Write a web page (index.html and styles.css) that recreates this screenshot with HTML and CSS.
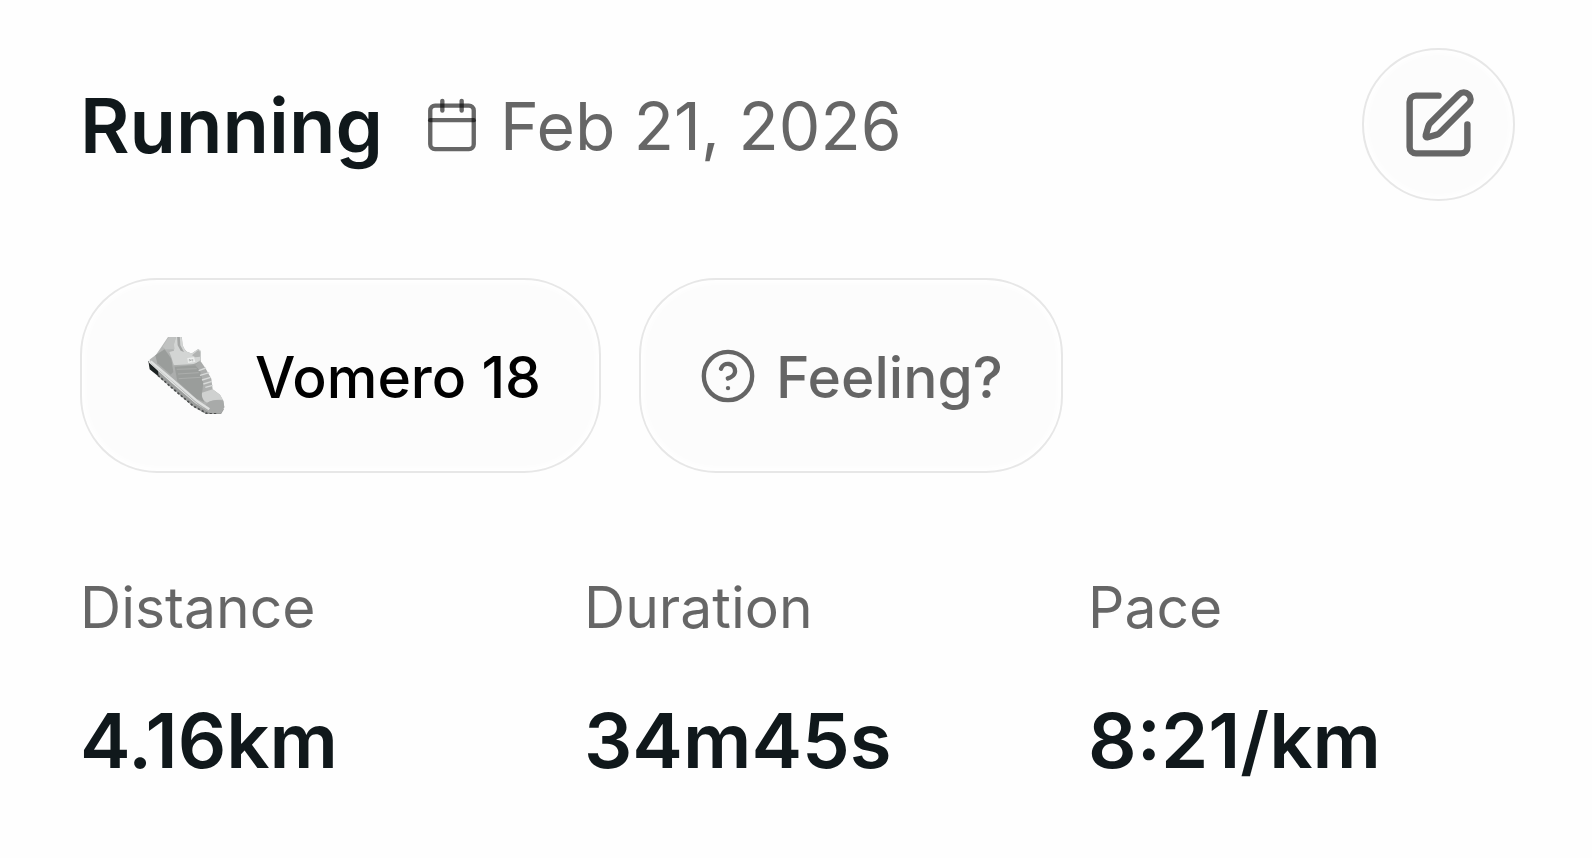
FILE: index.html
```html
<!DOCTYPE html>
<html lang="en">
<head>
  <meta charset="utf-8">
  <meta name="viewport" content="width=device-width, initial-scale=1">
  <title>Running</title>
  <link rel="stylesheet" href="styles.css">
</head>
<body>
  <main class="activity">
    <header class="activity-header">
      <div class="heading">
        <h1 class="title">Running</h1>
        <div class="date">
          <svg class="icon-small" viewBox="0 0 24 24" aria-hidden="true">
            <path d="M8 2v4"/>
            <path d="M16 2v4"/>
            <rect x="3" y="4" width="18" height="18" rx="2"/>
            <path d="M3 10h18"/>
          </svg>
          <time class="date-text" datetime="2026-02-21">Feb 21, 2026</time>
        </div>
      </div>
      <button class="edit" type="button" aria-label="Edit">
        <svg class="icon-edit" viewBox="0 0 24 24" aria-hidden="true">
          <path d="M12 3H5a2 2 0 0 0-2 2v14a2 2 0 0 0 2 2h14a2 2 0 0 0 2-2v-7"/>
          <path d="M18.375 2.625a1 1 0 0 1 3 3l-9.013 9.014a2 2 0 0 1-.853.505l-2.873.84a.5.5 0 0 1-.62-.62l.84-2.873a2 2 0 0 1 .506-.852z"/>
        </svg>
      </button>
    </header>

    <div class="chips">
      <button class="chip chip-shoe" type="button">
        <svg class="shoe" viewBox="30 51 288 231" aria-hidden="true">
          <defs>
            <linearGradient id="upper" x1="0" y1="0" x2="1" y2="1">
              <stop offset="0" stop-color="#b9bbba"/>
              <stop offset=".5" stop-color="#a9abaa"/>
              <stop offset="1" stop-color="#b4b6b5"/>
            </linearGradient>
            <filter id="soft" x="0" y="0" width="1" height="1">
              <feGaussianBlur stdDeviation="2"/>
            </filter>
          </defs>
          <g filter="url(#soft)">
            <path fill="#9b9d9c" d="M57 126L62 150L122 202L190 260L232 284H272L282 268L270 262L210 250L130 180Z"/>
            <path fill="#1d2020" d="M55 122L59 148L86 169L84 152Z"/>
            <path fill="none" stroke="#4d5050" stroke-width="5" stroke-dasharray="7 6" d="M84 166L124 202L190 258L232 281H262"/>
            <path fill="#e3e5e4" d="M58 118L57 128L84 152L126 190L196 250L234 273L262 276L240 258L180 216L112 158L72 116Z"/>
            <path fill="url(#upper)" d="M118 45H155L158 76C164 92 172 99 186 100L205 87L213 94L212 124L226 144L244 176L248 208L270 224L280 242L283 262L272 278H240L204 254L132 190L62 130L60 118L78 104L96 78Z"/>
            <path fill="#9a9d9b" d="M76 106L104 88L124 116L130 156L122 164L82 130Z"/>
            <path fill="#9a9d9b" d="M134 140L196 136L210 152L220 190L216 220L222 246L200 236L142 184Z"/>
            <path fill="#d3d5d4" d="M140 45H154L158 76C164 92 172 99 186 100L205 87L213 94L211 124L186 134L132 137L124 112L118 96L132 92L130 76Z"/>
            <path fill="#c0c2c1" d="M120 45H140L132 74L134 88L106 88L98 80Z"/>
            <path fill="#a5a7a6" d="M141 45H149L151 76L162 96L152 92L143 76Z"/>
            <path fill="#b1b3b2" d="M186 106L205 90L211 96L210 110L196 112Z"/>
            <path fill="#eceeed" d="M172 114L192 112L196 126L174 129Z"/>
            <path fill="none" stroke="#9fa1a0" stroke-width="2" d="M178 124v-6l5 5v-6M188 117v7M132 137L196 133L211 122"/>
            <path fill="none" stroke="#d8dad9" stroke-width="4" d="M206 152L228 144M210 166L238 158M216 180L242 172M220 192L246 184M226 202L248 196"/>
            <path fill="#cfd1d0" d="M216 218L248 208L270 224L279 240C262 238 246 240 232 248C220 242 214 232 216 218Z"/>
            <path fill="#a8aaa9" d="M232 248C246 239 264 238 280 242L283 262L272 278H244L220 264Z"/>
            <path fill="none" stroke="#b3b5b4" stroke-width="2" d="M140 148L200 146M144 162L206 158M146 176L212 172"/>
            <path fill="none" stroke="#dfe1e0" stroke-width="7" d="M62 124L128 180L202 244L238 268"/>
          </g>
        </svg>
        <span class="chip-text">Vomero 18</span>
      </button>
      <button class="chip chip-feeling" type="button">
        <svg class="icon-small" viewBox="0 0 24 24" aria-hidden="true">
          <circle cx="12" cy="12" r="10"/>
          <path d="M9.09 9a3 3 0 0 1 5.83 1c0 2-3 3-3 3"/>
          <path d="M12 17h.01"/>
        </svg>
        <span class="chip-text">Feeling?</span>
      </button>
    </div>

    <dl class="stats">
      <div class="stat">
        <dt class="label">Distance</dt>
        <dd class="value">4.16km</dd>
      </div>
      <div class="stat">
        <dt class="label">Duration</dt>
        <dd class="value">34m45s</dd>
      </div>
      <div class="stat">
        <dt class="label">Pace</dt>
        <dd class="value">8:21/km</dd>
      </div>
    </dl>
  </main>
</body>
</html>
```

FILE: styles.css
```css
:root {
  --ink: #10181b;
  --muted: rgba(0, 0, 0, 0.6);
  --line: #e7e7e7;
  --fill: #fcfcfc;
}

* {
  box-sizing: border-box;
}

body {
  margin: 0;
  background: #fefefe;
  color: var(--ink);
  font-family: Inter, "Liberation Sans", sans-serif;
}

.activity {
  display: flex;
  flex-direction: column;
  gap: 77px;
  padding: 48px 77px 60px 80px;
}

.activity-header {
  display: flex;
  align-items: center;
  justify-content: space-between;
}

.heading {
  display: flex;
  align-items: center;
  gap: 40px;
}

.title {
  margin: 0;
  padding-top: 2px;
  font-size: 76px;
  font-weight: 600;
  line-height: 115px;
}

.date {
  display: flex;
  align-items: center;
  gap: 19px;
  color: var(--muted);
  font-size: 66px;
  line-height: 96px;
}

.date-text {
  padding-top: 2px;
}

.icon-small,
.icon-edit {
  flex: none;
  fill: none;
  stroke: var(--muted);
  stroke-linecap: round;
  stroke-linejoin: round;
}

.icon-small {
  width: 58px;
  height: 58px;
  stroke-width: 1.8;
}

.icon-edit {
  width: 77px;
  height: 77px;
  stroke: #666;
  stroke-width: 2;
}

.edit,
.chip {
  display: flex;
  align-items: center;
  justify-content: center;
  border: 2px solid var(--line);
  background: var(--fill);
  box-shadow: inset 0 0 6px 3px #fff;
  font-family: inherit;
  cursor: pointer;
}

.edit {
  width: 153px;
  height: 153px;
  padding: 0;
  border-radius: 50%;
}

.chips {
  display: flex;
  flex-wrap: wrap;
  gap: 38px;
}

.chip {
  gap: 19px;
  height: 195px;
  padding: 0 58px;
  border-radius: 77px;
  font-size: 57px;
  font-weight: 500;
}

.chip-text {
  padding-top: 4px;
}

.chip-shoe {
  color: #000;
}

.chip-feeling {
  color: var(--muted);
}

.shoe {
  flex: none;
  width: 96px;
  height: 77px;
}

.stats {
  display: grid;
  grid-template-columns: repeat(3, 1fr);
  gap: 77px;
  margin: 0;
}

.stat {
  display: flex;
  flex-direction: column;
  gap: 18px;
}

.label {
  color: var(--muted);
  font-size: 57px;
  line-height: 115px;
}

.value {
  margin: 0;
  font-size: 76px;
  font-weight: 600;
  line-height: 115px;
}
```
